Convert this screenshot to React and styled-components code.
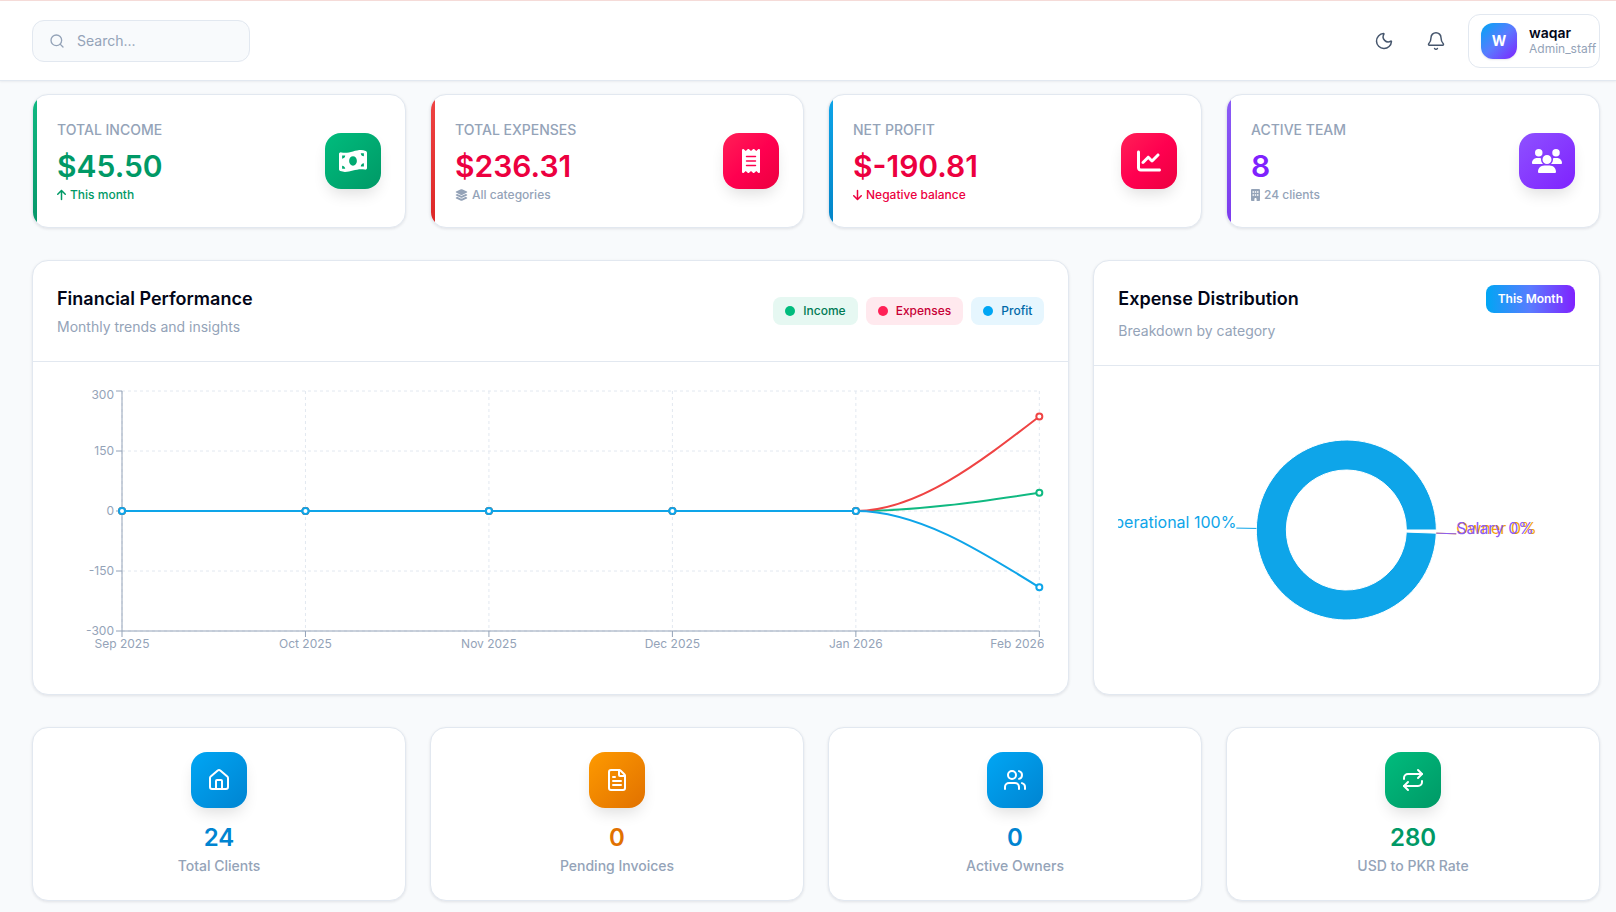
import React, { useLayoutEffect, useRef, useState } from "react";
import styled, { createGlobalStyle } from "styled-components";
import { Bell, FileText, House, Moon, Repeat, Search, Users } from "lucide-react";
import {
  FaArrowDown,
  FaArrowUp,
  FaBuilding,
  FaChartLine,
  FaLayerGroup,
  FaMoneyBillWave,
  FaReceipt,
  FaUsers,
} from "react-icons/fa6";

const stats = [
  {
    label: "Total Income",
    value: "$45.50",
    note: "This month",
    noteIcon: FaArrowUp,
    noteIconWidth: 9,
    icon: FaMoneyBillWave,
    iconSize: 28,
    color: "#009966",
    noteColor: "#009966",
    bar: "#10b981, #059669",
    tile: "#00bc7d, #009966",
  },
  {
    label: "Total Expenses",
    value: "$236.31",
    note: "All categories",
    noteIcon: FaLayerGroup,
    noteIconWidth: 13,
    icon: FaReceipt,
    iconSize: 24,
    color: "#ec003f",
    noteColor: "#94a3b8",
    bar: "#ef4444, #dc2626",
    tile: "#ff2056, #ff0050, #ec003f",
  },
  {
    label: "Net Profit",
    value: "$-190.81",
    note: "Negative balance",
    noteIcon: FaArrowDown,
    noteIconWidth: 9,
    icon: FaChartLine,
    iconSize: 24,
    color: "#ec003f",
    noteColor: "#ec003f",
    bar: "#0ea5e9, #0284c7",
    tile: "#ff2056, #ff0050, #ec003f",
  },
  {
    label: "Active Team",
    value: "8",
    note: "24 clients",
    noteIcon: FaBuilding,
    noteIconWidth: 9,
    icon: FaUsers,
    iconSize: 30,
    color: "#7f22fe",
    noteColor: "#94a3b8",
    bar: "#8b5cf6, #7c3aed",
    tile: "#8e51ff, #7f22fe",
  },
];

const totals = [
  { label: "Total Clients", value: "24", icon: House, color: "#0084d1", tile: "#00a6f4, #0084d1" },
  { label: "Pending Invoices", value: "0", icon: FileText, color: "#e17100", tile: "#fe9a00, #e17100" },
  { label: "Active Owners", value: "0", icon: Users, color: "#0084d1", tile: "#00a6f4, #0084d1" },
  { label: "USD to PKR Rate", value: "280", icon: Repeat, color: "#009966", tile: "#00bc7d, #009966" },
];

const legend = [
  { label: "Income", dot: "#00bc7d", color: "#007a55", background: "#e6f8f2" },
  { label: "Expenses", dot: "#ff2056", color: "#c70036", background: "#ffe9ee" },
  { label: "Profit", dot: "#00a6f4", color: "#0069a8", background: "#e6f6fe" },
];

const months = ["Sep 2025", "Oct 2025", "Nov 2025", "Dec 2025", "Jan 2026", "Feb 2026"];

const series = [
  { name: "Income", color: "#10b981", values: [0, 0, 0, 0, 0, 45.5] },
  { name: "Expenses", color: "#ef4444", values: [0, 0, 0, 0, 0, 236.31] },
  { name: "Profit", color: "#0ea5e9", values: [0, 0, 0, 0, 0, -190.81] },
];

const CHART_HEIGHT = 280;

// Gives the charts the width of the box they sit in, and follows it on resize.
function useWidth() {
  const ref = useRef(null);
  const [width, setWidth] = useState(0);

  useLayoutEffect(() => {
    const measure = () => setWidth(ref.current.getBoundingClientRect().width);
    measure();
    const observer = new ResizeObserver(measure);
    observer.observe(ref.current);
    return () => observer.disconnect();
  }, []);

  return [ref, width];
}

function TrendChart() {
  const [ref, width] = useWidth();
  const left = 65;
  const right = width - 5;
  const top = 5;
  const bottom = 245;
  const ticks = [300, 150, 0, -150, -300];
  const step = (right - left) / (months.length - 1);
  const x = (i) => left + i * step;
  const y = (value) => top + ((300 - value) / 600) * (bottom - top);

  // Flat up to the last month, then a monotone curve to its value.
  const linePath = (values) => {
    const last = values.length - 1;
    const start = y(values[last - 1]);
    const end = y(values[last]);
    return (
      `M${x(0)},${y(values[0])}L${x(last - 1)},${start}` +
      `C${x(last - 1) + step / 3},${start} ${x(last) - step / 3},${end - (end - start) / 2} ${x(last)},${end}`
    );
  };

  return (
    <ChartBox ref={ref}>
      {width > 0 && (
        <Chart width={width} height={CHART_HEIGHT} role="img" aria-label="Monthly income, expenses and profit">
          <g stroke="#e2e8f0" strokeDasharray="3 3">
            {ticks.map((tick) => (
              <line key={tick} x1={left} x2={right} y1={y(tick)} y2={y(tick)} />
            ))}
            {months.map((month, i) => (
              <line key={month} x1={x(i)} x2={x(i)} y1={top} y2={bottom} />
            ))}
          </g>
          <g stroke="#94a3b8">
            <line x1={left} x2={right} y1={bottom} y2={bottom} />
            <line x1={left} x2={left} y1={top} y2={bottom} />
            {ticks.map((tick) => (
              <line key={tick} x1={left - 6} x2={left} y1={y(tick)} y2={y(tick)} />
            ))}
            {months.map((month, i) => (
              <line key={month} x1={x(i)} x2={x(i)} y1={bottom} y2={bottom + 6} />
            ))}
          </g>
          {ticks.map((tick) => (
            <AxisText key={tick} x={left - 8} y={Math.max(y(tick), 9) + 4} textAnchor="end">
              {tick}
            </AxisText>
          ))}
          {months.map((month, i) => {
            const last = i === months.length - 1;
            return (
              <AxisText key={month} x={last ? width : x(i)} y={bottom + 17} textAnchor={last ? "end" : "middle"}>
                {month}
              </AxisText>
            );
          })}
          {series.map((line) => (
            <g key={line.name} stroke={line.color} strokeWidth="2">
              <path d={linePath(line.values)} fill="none" />
              {line.values.map((value, i) => (
                <circle key={i} cx={x(i)} cy={y(value)} r="3" fill="#fff" />
              ))}
            </g>
          ))}
        </Chart>
      )}
    </ChartBox>
  );
}

function ExpenseDonut() {
  const [ref, width] = useWidth();
  const cx = width / 2;
  const cy = CHART_HEIGHT / 2;
  const point = (radius, degrees) => {
    const angle = (-degrees * Math.PI) / 180;
    return [cx + radius * Math.cos(angle), cy + radius * Math.sin(angle)];
  };
  const ring =
    `M${point(90, 0)}A90,90 0 1,0 ${point(90, 358)}` +
    `L${point(60, 358)}A60,60 0 1,1 ${point(60, 0)}Z`;

  const labels = [
    { text: "Operational 100%", color: "#0ea5e9", angle: 179, anchor: "end" },
    { text: "Owner 0%", color: "#f59e0b", angle: 358, anchor: "start" },
    { text: "Salary 0%", color: "#8b5cf6", angle: 358, anchor: "start" },
  ];

  return (
    <ChartBox ref={ref}>
      {width > 0 && (
        <Chart width={width} height={CHART_HEIGHT} role="img" aria-label="Expenses by category">
          <path d={ring} fill="#0ea5e9" stroke="#fff" />
          {labels.map((label) => {
            const [x1, y1] = point(90, label.angle);
            const [x2, y2] = point(110, label.angle);
            return (
              <g key={label.text}>
                <line x1={x1} y1={y1} x2={x2} y2={y2} stroke={label.color} />
                <SliceText x={x2} y={y2} fill={label.color} textAnchor={label.anchor}>
                  {label.text}
                </SliceText>
              </g>
            );
          })}
        </Chart>
      )}
    </ChartBox>
  );
}

function App() {
  return (
    <Page>
      <GlobalStyle />
      {/* Top bar with search and the account button */}
      <Header>
        <SearchBox>
          <Search size={16} />
          <SearchInput type="text" placeholder="Search..." aria-label="Search" />
        </SearchBox>
        <HeaderActions>
          <IconButton type="button" aria-label="Toggle dark mode">
            <Moon size={20} strokeWidth={1.75} />
          </IconButton>
          <IconButton type="button" aria-label="Notifications">
            <Bell size={20} strokeWidth={1.75} />
          </IconButton>
          <ProfileButton type="button">
            <Avatar>W</Avatar>
            <ProfileText>
              <UserName>waqar</UserName>
              <UserRole>Admin_staff</UserRole>
            </ProfileText>
          </ProfileButton>
        </HeaderActions>
      </Header>

      <Main>
        <CardGrid>
          {stats.map((stat) => (
            <StatCard key={stat.label} $bar={stat.bar}>
              <div>
                <StatLabel>{stat.label}</StatLabel>
                <StatValue $color={stat.color}>{stat.value}</StatValue>
                <StatNote $color={stat.noteColor} $iconWidth={stat.noteIconWidth}>
                  <stat.noteIcon />
                  {stat.note}
                </StatNote>
              </div>
              <Tile $colors={stat.tile}>
                <stat.icon size={stat.iconSize} />
              </Tile>
            </StatCard>
          ))}
        </CardGrid>

        <ChartGrid>
          <Card>
            <CardHeader>
              <HeaderRow>
                <div>
                  <CardTitle>Financial Performance</CardTitle>
                  <CardSubtitle $gap={4}>Monthly trends and insights</CardSubtitle>
                </div>
                <Legend>
                  {legend.map((item) => (
                    <LegendChip key={item.label} $color={item.color} $background={item.background}>
                      <LegendDot $color={item.dot} />
                      {item.label}
                    </LegendChip>
                  ))}
                </Legend>
              </HeaderRow>
            </CardHeader>
            <CardBody>
              <TrendChart />
            </CardBody>
          </Card>

          <Card>
            <CardHeader>
              <HeaderRow>
                <CardTitle>Expense Distribution</CardTitle>
                <PeriodBadge>This Month</PeriodBadge>
              </HeaderRow>
              <CardSubtitle $gap={8}>Breakdown by category</CardSubtitle>
            </CardHeader>
            <CardBody>
              <ExpenseDonut />
            </CardBody>
          </Card>
        </ChartGrid>

        <CardGrid>
          {totals.map((total) => (
            <TotalCard key={total.label}>
              <Tile $colors={total.tile}>
                <total.icon size={24} />
              </Tile>
              <TotalValue $color={total.color}>{total.value}</TotalValue>
              <TotalLabel>{total.label}</TotalLabel>
            </TotalCard>
          ))}
        </CardGrid>
      </Main>
    </Page>
  );
}

export default App;

const GlobalStyle = createGlobalStyle`
  *, *::before, *::after {
    box-sizing: border-box;
  }

  body {
    margin: 0;
    background: #f8fafc;
    color: #020618;
    font-family: Inter, "Open Sans", sans-serif;
  }

  h2, p {
    margin: 0;
  }

  button, input {
    font-family: inherit;
  }
`;

const Page = styled.div`
  min-height: 100vh;
  border-top: 1px solid #f6dcd9;
`;

const Header = styled.header`
  display: flex;
  align-items: center;
  justify-content: space-between;
  height: 80px;
  padding: 0 16px 0 32px;
  background: #fff;
  border-bottom: 1px solid #e2e8f0;
  box-shadow: 0 1px 2px rgba(15, 23, 42, 0.06);
`;

const SearchBox = styled.label`
  display: flex;
  align-items: center;
  gap: 12px;
  width: 218px;
  height: 42px;
  padding: 0 16px;
  background: #f8fafc;
  border: 1px solid #e2e8f0;
  border-radius: 12px;
  color: #94a3b8;

  svg {
    flex-shrink: 0;
  }
`;

const SearchInput = styled.input`
  flex: 1;
  min-width: 0;
  padding: 0;
  border: none;
  outline: none;
  background: transparent;
  color: #020618;
  font-size: 14px;
  line-height: 20px;

  &::placeholder {
    color: #94a3b8;
  }
`;

const HeaderActions = styled.div`
  display: flex;
  align-items: center;
  gap: 12px;
`;

const IconButton = styled.button`
  display: grid;
  place-items: center;
  width: 40px;
  height: 40px;
  padding: 0;
  border: none;
  border-radius: 12px;
  background: transparent;
  color: #45556c;
  cursor: pointer;
`;

const ProfileButton = styled.button`
  display: flex;
  align-items: center;
  gap: 12px;
  width: 132px;
  padding: 8px 12px;
  border: 1px solid #e2e8f0;
  border-radius: 12px;
  background: #fff;
  text-align: left;
  overflow: hidden;
  cursor: pointer;
`;

const Avatar = styled.span`
  display: grid;
  place-items: center;
  flex-shrink: 0;
  width: 36px;
  height: 36px;
  border-radius: 12px;
  background: linear-gradient(135deg, #00a6f4, #5a7bff, #7f22fe);
  box-shadow: 0 1px 2px rgba(15, 23, 42, 0.1);
  color: #fff;
  font-size: 14px;
  font-weight: 700;
`;

const ProfileText = styled.span`
  display: flex;
  flex-direction: column;
`;

const UserName = styled.span`
  color: #020618;
  font-size: 14px;
  font-weight: 600;
  line-height: 16px;
`;

const UserRole = styled.span`
  color: #94a3b8;
  font-size: 12px;
  line-height: 16px;
`;

const Main = styled.main`
  display: grid;
  gap: 32px;
  padding: 13px 16px 10px 32px;
`;

const CardGrid = styled.div`
  display: grid;
  grid-template-columns: repeat(4, minmax(0, 1fr));
  gap: 24px;
`;

const ChartGrid = styled.div`
  display: grid;
  grid-template-columns: repeat(3, minmax(0, 1fr));
  gap: 24px;

  > :first-child {
    grid-column: span 2;
  }
`;

const Card = styled.section`
  background: #fff;
  border: 1px solid #e2e8f0;
  border-radius: 16px;
  box-shadow: 0 1px 3px rgba(15, 23, 42, 0.1);
  overflow: hidden;
`;

// The coloured strip on the left edge is clipped by the rounded card.
const StatCard = styled(Card)`
  position: relative;
  display: flex;
  align-items: center;
  justify-content: space-between;
  padding: 24px;

  &::before {
    content: "";
    position: absolute;
    inset: 0 auto 0 0;
    width: 4px;
    background: linear-gradient(${(props) => props.$bar});
  }
`;

const StatLabel = styled.p`
  color: #94a3b8;
  font-size: 14px;
  font-weight: 500;
  line-height: 22px;
  text-transform: uppercase;
`;

const StatValue = styled.p`
  margin-top: 7px;
  color: ${(props) => props.$color};
  font-size: 30px;
  font-weight: 600;
  line-height: 36px;
`;

const StatNote = styled.p`
  display: flex;
  align-items: center;
  gap: 4px;
  margin-top: 3px;
  color: ${(props) => props.$color};
  font-size: 12px;
  font-weight: 500;
  line-height: 16px;

  svg {
    width: ${(props) => props.$iconWidth}px;
    height: 12px;
  }
`;

const Tile = styled.div`
  display: grid;
  place-items: center;
  flex-shrink: 0;
  width: 56px;
  height: 56px;
  border-radius: 16px;
  background: linear-gradient(135deg, ${(props) => props.$colors});
  box-shadow: 0 8px 16px -4px rgba(0, 0, 0, 0.14);
  color: #fff;
`;

const CardHeader = styled.div`
  padding: 24px;
  border-bottom: 1px solid #e2e8f0;
`;

const HeaderRow = styled.div`
  display: flex;
  align-items: center;
  justify-content: space-between;
`;

const CardTitle = styled.h2`
  font-size: 18px;
  font-weight: 600;
  line-height: 28px;
`;

const CardSubtitle = styled.p`
  margin-top: ${(props) => props.$gap}px;
  color: #94a3b8;
  font-size: 14px;
  line-height: 20px;
`;

const Legend = styled.div`
  display: flex;
  gap: 8px;
`;

const LegendChip = styled.span`
  display: flex;
  align-items: center;
  gap: 8px;
  padding: 6px 12px;
  border-radius: 8px;
  background: ${(props) => props.$background};
  color: ${(props) => props.$color};
  font-size: 12px;
  font-weight: 500;
  line-height: 16px;
`;

const LegendDot = styled.span`
  width: 10px;
  height: 10px;
  border-radius: 50%;
  background: ${(props) => props.$color};
`;

const PeriodBadge = styled.span`
  padding: 6px 12px;
  border-radius: 8px;
  background: linear-gradient(90deg, #00a6f4, #5a7bff, #7f22fe);
  color: #fff;
  font-size: 12px;
  font-weight: 600;
  line-height: 16px;
`;

const CardBody = styled.div`
  padding: 24px;
`;

const ChartBox = styled.div`
  height: ${CHART_HEIGHT}px;
  overflow: hidden;
`;

const Chart = styled.svg`
  display: block;
  overflow: hidden;
`;

const AxisText = styled.text`
  fill: #94a3b8;
  font-size: 12px;
`;

const SliceText = styled.text`
  font-size: 16px;
`;

const TotalCard = styled(Card)`
  display: flex;
  flex-direction: column;
  align-items: center;
  padding: 24px;
`;

const TotalValue = styled.p`
  margin-top: 14px;
  color: ${(props) => props.$color};
  font-size: 24px;
  font-weight: 600;
  line-height: 32px;
`;

const TotalLabel = styled.p`
  margin-top: 2px;
  color: #94a3b8;
  font-size: 14px;
  font-weight: 500;
  line-height: 20px;
`;
